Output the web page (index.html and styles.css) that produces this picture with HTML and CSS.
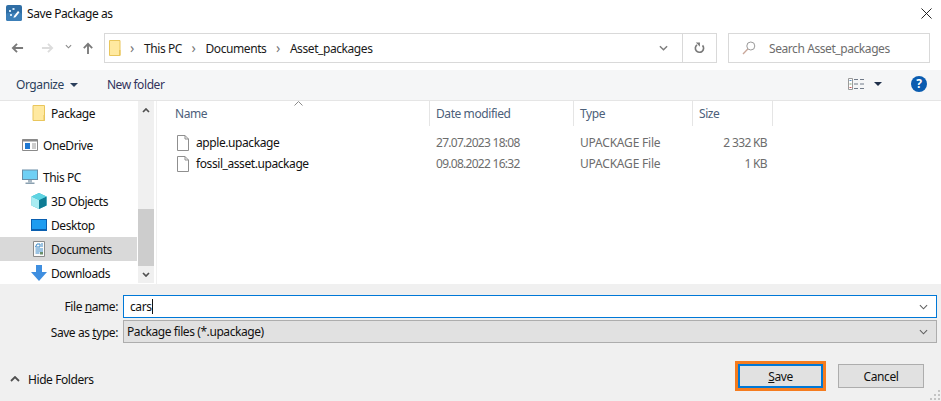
FILE: index.html
```html
<!DOCTYPE html>
<html lang="en">
<head>
<meta charset="utf-8">
<title>Save Package as</title>
<link rel="stylesheet" href="styles.css">
</head>
<body>
<div class="dialog">
  <header class="titlebar">
    <svg class="app-icon" viewBox="0 0 16 16"><rect width="16" height="16" rx="2" fill="#2f6ea5"/><rect y="8" width="16" height="8" rx="2" fill="#3c7fb8"/><path d="M3 5h2v2H3zM6.500 3h2v2h-2zM4 9h2v2H4z" fill="#cfe6f7"/><path d="M8 11l4-5 1.500 1.200-4 5-2 .6z" fill="#fff"/></svg>
    <span class="title">Save Package as</span>
    <svg class="close" viewBox="0 0 12 12"><path d="M.5.500l11 11M11.500.500l-11 11" stroke="#111" stroke-width="1" fill="none"/></svg>
  </header>

  <div class="navrow">
    <div class="navbtns">
      <svg class="nav-back" viewBox="0 0 14 12"><path d="M13 6H2M6.500 1.500L2 6l4.500 4.500" stroke="#7a7a7a" stroke-width="2" fill="none"/></svg>
      <svg class="nav-fwd" viewBox="0 0 14 12"><path d="M1 6h11M7.500 1.500L12 6l-4.500 4.500" stroke="#dcdcdc" stroke-width="2" fill="none"/></svg>
      <svg class="nav-down" viewBox="0 0 8 5"><path d="M1 1l3 3 3-3" stroke="#8a8a8a" stroke-width="1.300" fill="none"/></svg>
      <svg class="nav-up" viewBox="0 0 12 14"><path d="M6 13V2M1.500 6.500L6 2l4.500 4.500" stroke="#7a7a7a" stroke-width="2" fill="none"/></svg>
    </div>
    <div class="address">
      <svg class="addr-folder" viewBox="0 0 12 16"><path d="M.5.500h10.500v15H.5z" fill="#ffe9a0" stroke="#e9c65c"/><path d="M10 10h1.500v5.500H10z" fill="#e9c65c"/></svg>
      <span class="sep">›</span><span class="crumb">This PC</span>
      <span class="sep">›</span><span class="crumb">Documents</span>
      <span class="sep">›</span><span class="crumb">Asset_packages</span>
      <span class="addr-fill"></span>
      <svg class="addr-chev" viewBox="0 0 10 6"><path d="M1 1l4 4 4-4" stroke="#7d7d7d" stroke-width="1.600" fill="none"/></svg>
      <span class="addr-refresh">
        <svg viewBox="0 0 12 13"><path d="M9.300 3.600A4.500 4.500 0 1 1 3.300 3" stroke="#7a7a7a" stroke-width="1.800" fill="none"/><path d="M2 .5h4.500V5z" fill="#7a7a7a"/></svg>
      </span>
    </div>
    <div class="search">
      <svg class="search-icon" viewBox="0 0 14 14"><circle cx="8.800" cy="5" r="4" stroke="#9a9a9a" fill="none"/><path d="M5.800 8L1 13" stroke="#c9a79a" stroke-width="1.300"/></svg>
      <span class="search-text">Search Asset_packages</span>
    </div>
  </div>

  <div class="toolbar">
    <span class="tool">Organize</span>
    <svg class="tool-caret" viewBox="0 0 8 4"><path d="M0 0h8L4 4z" fill="#2b3f5c"/></svg>
    <span class="tool tool-new">New folder</span>
    <span class="tool-fill"></span>
    <svg class="view-icon" viewBox="0 0 17 12"><path d="M.5.500h4v11h-4z" fill="#fff" stroke="#9a9a9a"/><path d="M1.500 2h2v1h-2z" fill="#5b8fc0"/><path d="M1.500 5.500h2v1h-2z" fill="#7a9a6a"/><path d="M1.500 9h2v1h-2z" fill="#c85a5a"/><path d="M6 1.500h4M12 1.500h4M6 6h4M12 6h4M6 10.500h4M12 10.500h4" stroke="#707a88"/></svg>
    <svg class="view-caret" viewBox="0 0 8 4"><path d="M0 0h8L4 4z" fill="#1f2f4a"/></svg>
    <span class="help">?</span>
  </div>

  <div class="main">
    <nav class="sidebar">
      <div class="tree">
        <div class="item lvl2">
          <svg class="ico" viewBox="0 0 13 16"><path d="M.5.500h11.500v15H.5z" fill="#ffe9a0" stroke="#e9c65c"/><path d="M11 10h1.500v5.500H11z" fill="#e9c65c"/></svg>
          <span>Package</span>
        </div>
        <div class="item lvl1 gap">
          <svg class="ico" viewBox="0 0 16 12"><path d="M.5.500h15v11H.5z" fill="#fff" stroke="#8a8a8a"/><path d="M.5.500h15v2H.5z" fill="#8a8a8a"/><path d="M3 4h5v6H3z" fill="#1e78d2"/><path d="M10 5h4M10 7h4M10 9h4" stroke="#9a9a9a"/></svg>
          <span>OneDrive</span>
        </div>
        <div class="item lvl1 gap">
          <svg class="ico ico-pc" viewBox="0 0 16 15"><path d="M0 0h16v10.500H0z" fill="#6a8fa8"/><path d="M1 1h14v8.500H1z" fill="#6fd0f5"/><path d="M6 10.500h4V13H6z" fill="#a8b8c4"/><path d="M3.500 13h9v1.500h-9z" fill="#8aa0b0"/></svg>
          <span>This PC</span>
        </div>
        <div class="item lvl2">
          <svg class="ico" viewBox="0 0 16 16"><path d="M8 0l7.500 3.500v9L8 16 .5 12.500v-9z" fill="#2fb4c8"/><path d="M.5 3.500L8 7v9L.5 12.500z" fill="#a8ecf2"/><path d="M8 7l7.500-3.500v9L8 16z" fill="#0f7c94"/><path d="M8 0l7.500 3.500L8 7 .5 3.500z" fill="#5fd4e2"/></svg>
          <span>3D Objects</span>
        </div>
        <div class="item lvl2">
          <svg class="ico" viewBox="0 0 16 12"><path d="M0 0h16v12H0z" fill="#0a5fb0"/><path d="M1 1h14v9H1z" fill="#1e9cf0"/></svg>
          <span>Desktop</span>
        </div>
        <div class="item lvl2 selected">
          <svg class="ico" viewBox="0 0 12 16"><path d="M.5.500h11v15H.5z" fill="#fbfbfb" stroke="#8a8a8a"/><path d="M4 3h3v3H2.500zM8 3h2M8 5h2M2.500 8h7.500M2.500 10h7.500M2.500 12h4" stroke="#3d8ac8" fill="none"/><path d="M7 11h3v2.500H7z" fill="#6a8f6a"/></svg>
          <span>Documents</span>
        </div>
        <div class="item lvl2">
          <svg class="ico" viewBox="0 0 16 16"><path d="M5 0h6v7h5l-8 9-8-9h5z" fill="#3f8fe0"/></svg>
          <span>Downloads</span>
        </div>
      </div>
      <div class="scrollbar">
        <svg class="sb-arrow sb-up" viewBox="0 0 8 5"><path d="M1 4l3-3 3 3" stroke="#505050" stroke-width="1.700" fill="none"/></svg>
        <div class="sb-track"><div class="sb-thumb"></div></div>
        <svg class="sb-arrow sb-down" viewBox="0 0 8 5"><path d="M1 1l3 3 3-3" stroke="#505050" stroke-width="1.700" fill="none"/></svg>
      </div>
    </nav>
    <section class="files">
      <svg class="sort" viewBox="0 0 9 5"><path d="M.5 4.500l4-4 4 4" stroke="#8a8a8a" fill="none"/></svg>
      <div class="cols head">
        <div class="hcell">Name</div>
        <div class="hcell">Date modified</div>
        <div class="hcell">Type</div>
        <div class="hcell">Size</div>
      </div>
      <div class="cols row first">
        <div class="namecell">
          <svg class="file-ico" viewBox="0 0 12 16"><path d="M.5.500h7.500l3.500 3.500v11.500H.5z" fill="#fff" stroke="#8f8f8f"/><path d="M8 .5V4h3.500" fill="none" stroke="#8f8f8f"/></svg>
          <span>apple.upackage</span>
        </div>
        <div class="cell date">27.07.2023 18:08</div>
        <div class="cell type">UPACKAGE File</div>
        <div class="cell size">2 332 KB</div>
      </div>
      <div class="cols row">
        <div class="namecell">
          <svg class="file-ico" viewBox="0 0 12 16"><path d="M.5.500h7.500l3.500 3.500v11.500H.5z" fill="#fff" stroke="#8f8f8f"/><path d="M8 .5V4h3.500" fill="none" stroke="#8f8f8f"/></svg>
          <span>fossil_asset.upackage</span>
        </div>
        <div class="cell date">09.08.2022 16:32</div>
        <div class="cell type">UPACKAGE File</div>
        <div class="cell size">1 KB</div>
      </div>
    </section>
  </div>

  <footer class="bottom">
    <div class="form">
      <label class="flabel"><span>File <u>n</u>ame:</span></label>
      <div class="field field-name"><span class="val">cars</span><span class="caret-bar"></span>
        <svg class="chev" viewBox="0 0 10 6"><path d="M1 1l4 4 4-4" stroke="#606060" stroke-width="1.200" fill="none"/></svg>
      </div>
      <label class="flabel flabel-type"><span>Save as <u>t</u>ype:</span></label>
      <div class="field field-type"><span class="val">Package files (*.upackage)</span>
        <svg class="chev" viewBox="0 0 10 6"><path d="M1 1l4 4 4-4" stroke="#606060" stroke-width="1.200" fill="none"/></svg>
      </div>
    </div>
    <div class="actions">
      <div class="hide">
        <svg class="hide-caret" viewBox="0 0 10 6"><path d="M1 5l4-4 4 4" stroke="#505050" stroke-width="1.800" fill="none"/></svg>
        <span>Hide Folders</span>
      </div>
      <span class="act-fill"></span>
      <div class="save-ring"><button class="btn btn-save" type="button"><u>S</u>ave</button></div>
      <button class="btn btn-cancel" type="button">Cancel</button>
    </div>
    <svg class="grip" viewBox="0 0 11 11"><path d="M8 0h2v2H8zM4 4h2v2H4zM8 4h2v2H8zM0 8h2v2H0zM4 8h2v2H4zM8 8h2v2H8z" fill="#c4c4c4"/></svg>
  </footer>
</div>
</body>
</html>
```

FILE: styles.css
```css
* { box-sizing: border-box; }
html, body { margin: 0; padding: 0; }
body {
  width: 941px;
  height: 401px;
  overflow: hidden;
  background: #fff;
  font-family: "Noto Sans", "Open Sans", sans-serif;
  font-size: 12px;
  letter-spacing: -0.42px;
  color: #111;
}
svg { display: block; flex: none; }
.dialog { display: flex; flex-direction: column; width: 941px; height: 401px; }

.titlebar { display: flex; align-items: center; height: 33px; padding: 0 9px 7px 6px; flex: none; }
.app-icon { width: 16px; height: 16px; margin-right: 5px; }
.title { flex: 1; }
.close { width: 11px; height: 11px; margin-top: 0; }

.navrow { display: flex; height: 30px; flex: none; }
.navbtns { display: flex; align-items: center; width: 104px; padding-left: 11px; }
.nav-back { width: 13px; height: 12px; margin-right: 17px; }
.nav-fwd { width: 13px; height: 12px; margin-right: 11px; }
.nav-down { width: 7px; height: 5px; margin-right: 10px; margin-top: -3px; }
.nav-up { width: 12px; height: 13px; }
.address {
  display: flex; align-items: center; width: 613px;
  border: 1px solid #d9d9d9; padding-left: 4px; color: #1a1a1a;
}
.addr-folder { width: 12px; height: 16px; margin-right: 9px; }
.sep { color: #777; font-size: 14px; width: 6px; margin-right: 8px; line-height: 1; }
.crumb { margin-right: 9.500px; }
.addr-fill { flex: 1; }
.addr-chev { width: 9px; height: 6px; margin-right: 14px; }
.addr-refresh { display: flex; align-items: center; justify-content: center; width: 34px; height: 100%; border-left: 1px solid #d9d9d9; }
.addr-refresh svg { width: 11px; height: 12px; }
.search {
  display: flex; align-items: center; width: 202px; margin-left: 11px;
  border: 1px solid #d9d9d9; padding-left: 13px; color: #6d6d6d;
}
.search-icon { width: 14px; height: 14px; margin-right: 13px; }

.toolbar {
  display: flex; align-items: center; height: 31px; margin-top: 7px; padding: 0 14px 2px 16px; flex: none;
  background: #f5f6f7; border-bottom: 1px solid #e5e5e5; color: #2b3f5c;
}
.tool-caret { width: 8px; height: 4px; margin: 1px 0 0 6px; }
.tool-new { margin-left: 29px; color: #33335c; }
.tool-fill { flex: 1; }
.view-icon { width: 17px; height: 12px; }
.view-caret { width: 8px; height: 4px; margin: 0 29px 0 9px; }
.help {
  width: 16px; height: 16px; border-radius: 50%; background: #0a5cb0; color: #fff;
  font-weight: 700; font-size: 12px; line-height: 16px; text-align: center; letter-spacing: 0;
}

.main { display: flex; height: 183px; flex: none; overflow: hidden; }
.sidebar { display: flex; width: 157px; flex: none; border-right: 1px solid #f0f0f0; padding-right: 2px; }
.tree { width: 138px; flex: none; overflow: hidden; }
.item { display: flex; align-items: center; height: 24px; color: #111; }
.item.gap { margin-top: 8px; }
.lvl1 { padding-left: 22px; }
.lvl2 { padding-left: 31px; }
.ico { width: 16px; height: 16px; margin-right: 4px; }
.lvl1 .ico { margin-right: 5px; }
.selected { background: #d9d9d9; margin-right: 1px; }
.scrollbar { display: flex; flex-direction: column; align-items: center; width: 16px; flex: none; background: #f0f0f0; height: 182px; }
.sb-arrow { width: 8px; height: 5px; }
.sb-up { margin-top: 7px; }
.sb-track { flex: 1; width: 100%; padding-top: 96px; margin-bottom: 6px; }
.sb-thumb { height: 57px; background: #cdcdcd; }
.sb-down { margin-bottom: 6px; }

.files { position: relative; flex: 1; }
.sort { position: absolute; left: 137px; top: 0; width: 9px; height: 5px; }
.cols { display: grid; grid-template-columns: 273px 144px 119px 80px; }
.head { height: 25px; margin-bottom: 6px; color: #4c607a; }
.hcell { display: flex; align-items: center; padding-left: 6px; border-right: 1px solid #e5e5e5; }
.hcell:first-child { padding-left: 18px; }
.row { height: 21px; color: #6d6d6d; align-items: center; }
.namecell { display: flex; align-items: center; padding-left: 20px; color: #111; }
.file-ico { width: 12px; height: 16px; margin-right: 7px; }
.cell { padding-left: 6px; }
.date { letter-spacing: -0.72px; }
.type { letter-spacing: -0.2px; }
.size { text-align: right; padding-right: 6px; letter-spacing: -0.65px; }

.bottom { position: relative; flex: 1; background: #f0f0f0; }
.form {
  display: grid; grid-template-columns: 118px 1fr; column-gap: 5px; row-gap: 2px;
  padding: 11px 4px 0 0;
}
.flabel { display: flex; align-items: center; justify-content: flex-end; color: #111; }
.flabel-type { padding-top: 1px; }
.field { display: flex; align-items: center; height: 23px; padding: 0 8px 0 6px; }
.val { line-height: 1; }
.field-name { background: #fff; border: 1px solid #0078d7; }
.field-type { background: #e1e1e1; border: 1px solid #adadad; padding: 1px 8px 0 3px; }
.caret-bar { width: 1px; height: 15px; background: #111; }
.chev { width: 9px; height: 6px; margin-left: auto; }
.actions { display: flex; align-items: center; height: 30px; margin-top: 18px; padding: 0 17px 0 10px; }
.hide { display: flex; align-items: center; margin-top: 6px; color: #111; }
.hide-caret { width: 10px; height: 6px; margin-right: 8px; }
.act-fill { flex: 1; }
.save-ring { border: 3px solid #f57c1f; margin-right: 12px; }
.btn { display: block; height: 24px; padding: 0; font: inherit; letter-spacing: inherit; color: #111; background: #e1e1e1; }
.btn-save { width: 85px; border: 2px solid #0078d7; }
.btn-cancel { width: 86px; border: 1px solid #adadad; }
.grip { position: absolute; right: 0; bottom: 0; width: 11px; height: 11px; }
```
